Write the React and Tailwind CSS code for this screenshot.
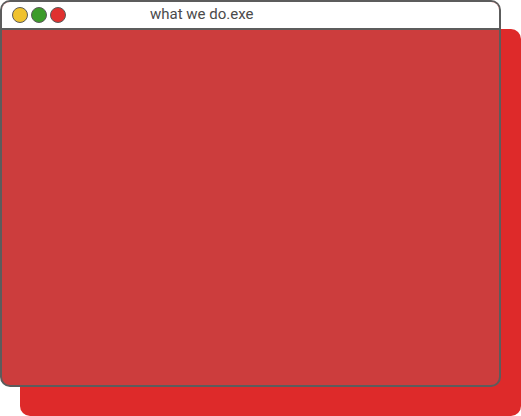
export default function App() {
  return (
    <div className="w-[521px] h-[416px] font-['Roboto',sans-serif]">
      <div className="w-[501px] h-[387px] rounded-[10px] border-2 border-[#5c5c5c] bg-[#cc3d3d] shadow-[20px_29px_0_#de2a2a] overflow-hidden flex flex-col">
        <div className="h-[28px] shrink-0 bg-white border-b-2 border-[#5c5c5c] flex items-center pl-[10px]">
          <div className="flex gap-[3px]">
            <span className="w-[16px] h-[16px] rounded-full bg-[#f0c22e] border-[1.5px] border-[#5a5a5a]" />
            <span className="w-[16px] h-[16px] rounded-full bg-[#3c9b2a] border-[1.5px] border-[#5a5a5a]" />
            <span className="w-[16px] h-[16px] rounded-full bg-[#e0302f] border-[1.5px] border-[#5a5a5a]" />
          </div>
          <span className="ml-[84px] text-[15px] leading-none text-[#4a4a4a] pb-[1px]">what we do.exe</span>
        </div>
        <div className="flex-1" />
      </div>
    </div>
  );
}
